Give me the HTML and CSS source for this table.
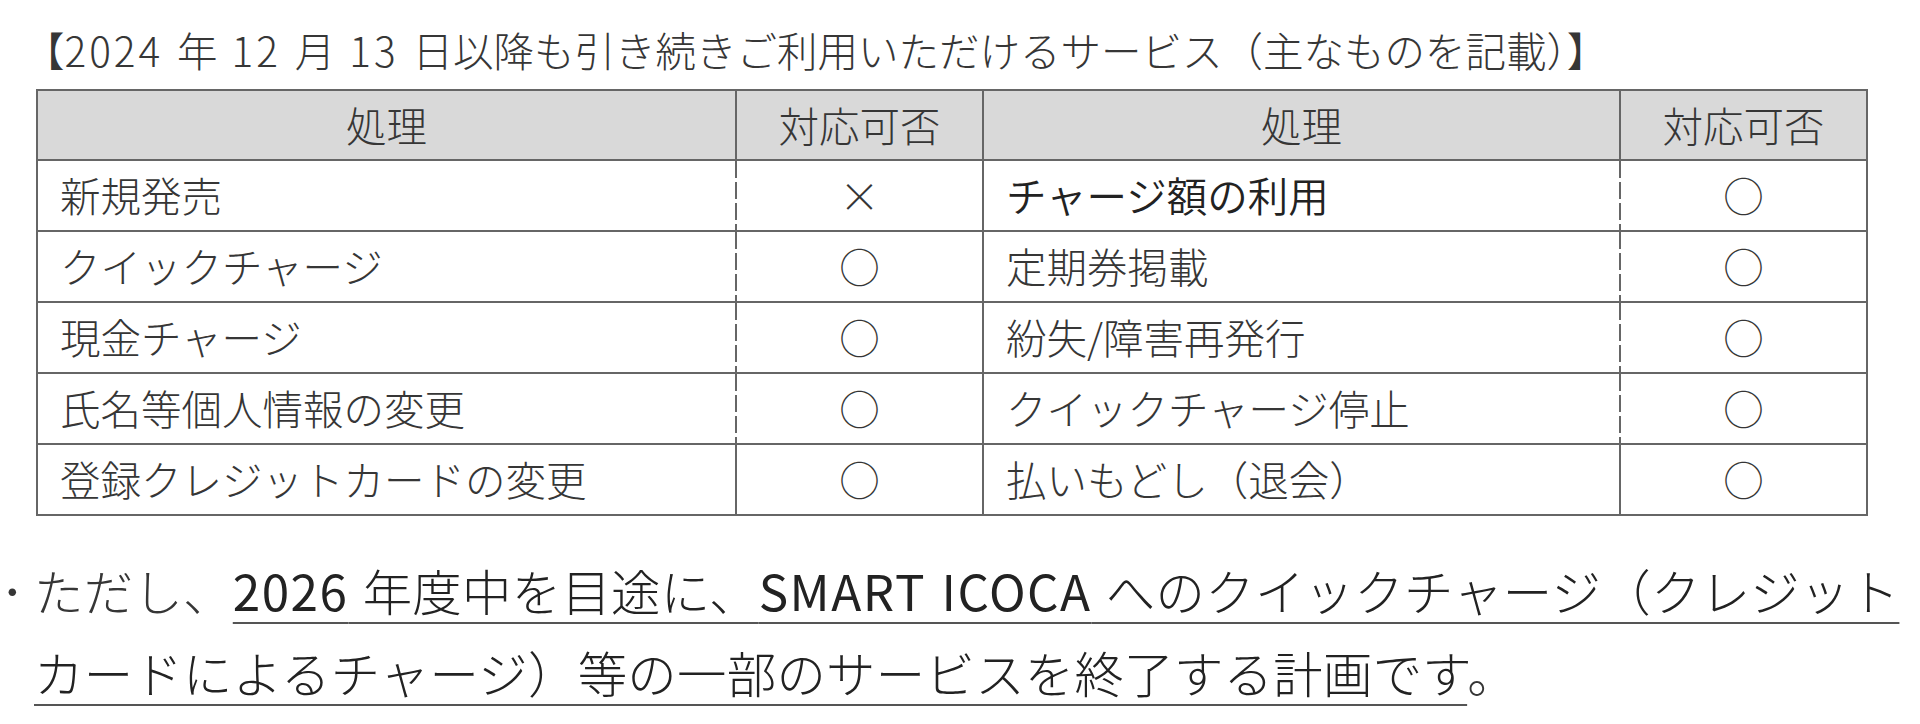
FILE: index.html
```html
<!DOCTYPE html>
<html lang="ja">
<head>
<meta charset="utf-8">
<title>サービス対応表</title>
<link rel="stylesheet" href="styles.css">
</head>
<body>
<main class="page">
  <h1 class="title">【<span class="num">2024</span> 年 <span class="num">12</span> 月 <span class="num">13</span> 日以降も引き続きご利用いただけるサービス（主なものを記載）】</h1>
  <div class="grid">
    <div class="cell head">処理</div>
    <div class="cell head">対応可否</div>
    <div class="cell head">処理</div>
    <div class="cell head">対応可否</div>

    <div class="cell name dash">新規発売</div>
    <div class="cell mark">×</div>
    <div class="cell name dash strong">チャージ額の利用</div>
    <div class="cell mark">○</div>

    <div class="cell name dash">クイックチャージ</div>
    <div class="cell mark">○</div>
    <div class="cell name dash">定期券掲載</div>
    <div class="cell mark">○</div>

    <div class="cell name dash">現金チャージ</div>
    <div class="cell mark">○</div>
    <div class="cell name dash">紛失/障害再発行</div>
    <div class="cell mark">○</div>

    <div class="cell name dash">氏名等個人情報の変更</div>
    <div class="cell mark">○</div>
    <div class="cell name dash">クイックチャージ停止</div>
    <div class="cell mark">○</div>

    <div class="cell name">登録クレジットカードの変更</div>
    <div class="cell mark">○</div>
    <div class="cell name">払いもどし（退会）</div>
    <div class="cell mark">○</div>
  </div>
  <p class="note"><span class="bullet">･</span>ただし、<span class="ul"><span class="latin">2026</span> 年度中を目途に、<span class="latin">SMART ICOCA</span> へのクイックチャージ（クレジット<br>カードによるチャージ）等の一部のサービスを終了する計画です</span>。</p>
</main>
</body>
</html>
```

FILE: styles.css
```css
html, body {
  margin: 0;
  padding: 0;
  background: #ffffff;
  overflow: hidden;
}

body {
  font-family: "Noto Sans CJK JP", "Noto Sans", sans-serif;
  color: #363636;
}

.page {
  padding-top: 22px;
}

.title {
  margin: 0;
  padding-left: 24px;
  font-size: 40.5px;
  font-weight: 300;
  line-height: 56px;
  word-spacing: 5px;
  white-space: nowrap;
}

.num {
  letter-spacing: 3px;
}

.grid {
  display: grid;
  grid-template-columns: 699px 247px 637px 247px;
  grid-template-rows: 70px repeat(5, 71px);
  width: max-content;
  margin: 11px 0 0 36px;
  border-top: 2px solid #666666;
  border-left: 2px solid #666666;
}

.cell {
  box-sizing: border-box;
  display: flex;
  align-items: center;
  border-right: 2px solid #666666;
  border-bottom: 2px solid #666666;
  font-size: 40.5px;
  font-weight: 300;
  line-height: 1;
  white-space: nowrap;
}

.head {
  justify-content: center;
  background-color: #d9d9d9;
}

.name {
  padding-left: 22px;
}

.mark {
  justify-content: center;
}

.strong {
  font-weight: 350;
  color: #222222;
}

.dash {
  border-right-color: transparent;
  background-image: repeating-linear-gradient(to bottom, #666666 0 17px, transparent 17px 21px);
  background-size: 2px 100%;
  background-position: right top;
  background-repeat: no-repeat;
  background-origin: border-box;
}

.note {
  margin: 33px 0 0 0;
  padding-left: 34px;
  text-indent: -34px;
  font-size: 49.4px;
  font-weight: 300;
  line-height: 82px;
  letter-spacing: 0.3px;
  word-spacing: 3px;
  white-space: nowrap;
}

.bullet {
  display: inline-block;
  width: 34px;
  text-indent: 0;
  letter-spacing: 0;
}

.ul {
  color: #222222;
  text-decoration: underline;
  text-decoration-thickness: 2px;
  text-underline-offset: 11px;
  text-decoration-color: #555555;
  text-decoration-skip-ink: none;
}

.latin {
  font-weight: 400;
  letter-spacing: 1.5px;
}
```
